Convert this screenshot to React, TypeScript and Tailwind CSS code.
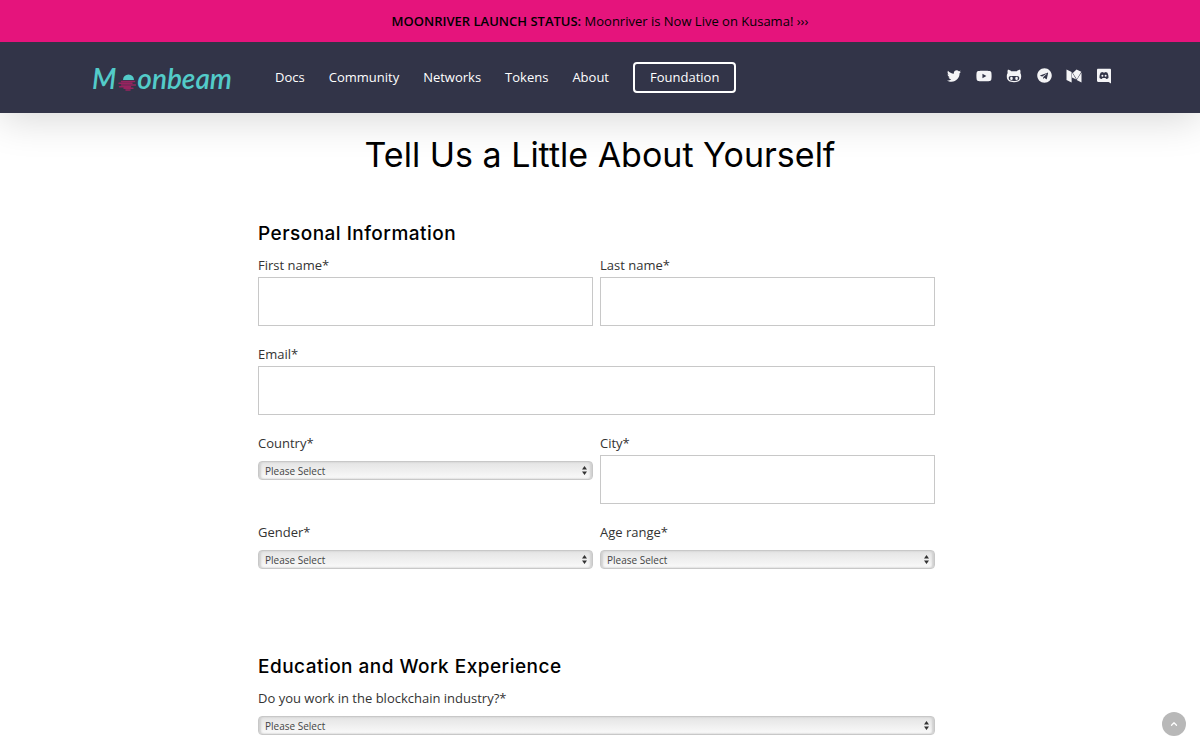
import type { ReactNode } from "react";
import { FaTelegram, FaTwitter, FaYoutube } from "react-icons/fa";
import { ChevronUp } from "lucide-react";

const navLinks = ["Docs", "Community", "Networks", "Tokens", "About"];

function MoonIcon() {
  return (
    <svg viewBox="0 0 18 17" className="mt-2.5 h-[17px] w-[18px] shrink-0" aria-hidden="true">
      <path d="M5 6a5.500 5.500 0 0 1 11 0z" fill="#53cbc9" />
      <path
        d="M3.500 7.500h13M1 9.300h13M3.500 11h14M1.500 12.700h11M6 14.300h9M8 16h4"
        stroke="#98235f"
        strokeWidth="1.500"
        strokeLinecap="round"
      />
    </svg>
  );
}

function Logo() {
  return (
    <a
      href="#"
      aria-label="Moonbeam"
      className="flex w-[140px] items-center justify-between font-['Lato',sans-serif] text-[28px] leading-8 font-semibold text-[#53cbc9] italic"
    >
      <span>M</span>
      <MoonIcon />
      <span>onbeam</span>
    </a>
  );
}

function GithubIcon() {
  return (
    <svg viewBox="0 0 16 16" className="size-4" fill="currentColor">
      <path
        fillRule="evenodd"
        d="M1.900 1.800c1.300 0 2.400.6 3.300 1.400h5.600c.9-.8 2-1.400 3.300-1.400.5 1.200.5 2.300.2 3.200.6.900.9 2 .9 3.600 0 4-2.600 5.600-7.200 5.600S.8 12.600.8 8.600C.8 7 1.100 5.900 1.700 5c-.3-.9-.3-2 .2-3.200zM5 7.900c-1.500 0-2.300.8-2.300 2.200 0 2.200 1.900 2.900 5.300 2.900s5.300-.7 5.300-2.900c0-1.400-.8-2.200-2.300-2.200z"
      />
      <rect x="4.200" y="8.800" width="2.500" height="3.200" rx="1.200" />
      <rect x="9.300" y="8.800" width="2.500" height="3.200" rx="1.200" />
    </svg>
  );
}

function MediumIcon() {
  return (
    <svg viewBox="0 0 16 16" className="size-4" fill="currentColor">
      <path d="M.5 1.500 5.600 4v10.500L.5 12z" />
      <path d="m6 4.400 4.300 7.200L6 9.600z" />
      <path d="m10.500 1.500 4.800 2.300-4.500 7.400L6.800 5z" />
      <path d="M15.500 4.500v10L10.700 12z" />
    </svg>
  );
}

function DiscordIcon() {
  return (
    <svg viewBox="0 0 16 16" className="size-4" fill="currentColor">
      <path
        fillRule="evenodd"
        d="M2.200.8h11.600c.8 0 1.200.5 1.200 1.200v13.500L12.600 14H2.200C1.400 14 1 13.500 1 12.800V2C1 1.300 1.400.8 2.200.8zM4.800 4.500C3.800 6.100 3.400 7.900 3.500 9.900c.7.700 1.500 1 2.400 1l.6-.8h3l.6.8c.9 0 1.700-.3 2.400-1 .1-2-.3-3.800-1.300-5.400-.7-.4-1.300-.6-1.900-.6l-.3.500H7l-.3-.5c-.6 0-1.200.2-1.900.6z"
      />
      <circle cx="6.400" cy="7.800" r="1" />
      <circle cx="9.600" cy="7.800" r="1" />
    </svg>
  );
}

const socials: { name: string; icon: ReactNode }[] = [
  { name: "Twitter", icon: <FaTwitter className="size-3.5" /> },
  { name: "YouTube", icon: <FaYoutube className="size-4" /> },
  { name: "GitHub", icon: <GithubIcon /> },
  { name: "Telegram", icon: <FaTelegram className="size-[15px]" /> },
  { name: "Medium", icon: <MediumIcon /> },
  { name: "Discord", icon: <DiscordIcon /> },
];

function SiteHeader() {
  return (
    <header className="bg-[#323448] shadow-[0_6px_40px_rgba(0,0,0,0.16)]">
      <div className="flex h-[71px] items-center pr-[88px] pl-[92px]">
        <Logo />
        <nav className="ml-[43px] flex items-center gap-6 text-[13px] text-white">
          {navLinks.map((link) => (
            <a key={link} href="#">
              {link}
            </a>
          ))}
          <a href="#" className="rounded border-2 border-white px-[15px] leading-[27px]">
            Foundation
          </a>
        </nav>
        <ul className="ml-auto flex items-center gap-3.5 pb-1 text-[#f4f4f6]">
          {socials.map(({ name, icon }) => (
            <li key={name}>
              <a href="#" aria-label={name} className="flex size-4 items-center justify-center">
                {icon}
              </a>
            </li>
          ))}
        </ul>
      </div>
    </header>
  );
}

interface FieldProps {
  id: string;
  label: string;
  type?: string;
}

function TextField({ id, label, type = "text" }: FieldProps) {
  return (
    <div>
      <label htmlFor={id} className="block leading-6">
        {label}
      </label>
      <input
        id={id}
        name={id}
        type={type}
        className="block h-[49px] w-full border border-[#c8c8c8] bg-white px-3 outline-none"
      />
    </div>
  );
}

function SelectField({ id, label }: FieldProps) {
  return (
    <div>
      <label htmlFor={id} className="block leading-6">
        {label}
      </label>
      <div className="relative mt-1.5">
        <select
          id={id}
          name={id}
          className="block h-[19px] w-full appearance-none rounded border border-[#c8c8c8] bg-linear-to-b from-[#e4e4e4] to-[#fafafa] px-1.5 text-[10px] leading-4 text-[#444] shadow-[inset_2px_0_2px_#d0d0d0,inset_-2px_0_2px_#d0d0d0]"
        >
          <option>Please Select</option>
        </select>
        <svg
          viewBox="0 0 5 9"
          className="pointer-events-none absolute top-[5px] right-1.5 h-[9px] w-[5px]"
          fill="#333"
        >
          <path d="M2.500 0 5 3.500H0zM2.500 9 5 5.500H0z" />
        </svg>
      </div>
    </div>
  );
}

function SectionTitle({ children }: { children: ReactNode }) {
  return (
    <h2 className="font-['Inter',sans-serif] text-[19px] leading-8 font-medium tracking-wide text-black">
      {children}
    </h2>
  );
}

export default function App() {
  return (
    <div className="h-screen overflow-hidden bg-white font-['Open_Sans',sans-serif] text-[13px] text-[#333]">
      <a href="#" className="relative z-10 block bg-[#e5147c] py-2 text-center leading-[26px] text-black">
        <strong className="font-semibold">MOONRIVER LAUNCH STATUS:</strong> Moonriver is Now Live on Kusama! ›››
      </a>
      <SiteHeader />

      <main className="pt-4">
        <h1 className="text-center font-['Inter',sans-serif] text-[34px] leading-[52px] text-black">
          Tell Us a Little About Yourself
        </h1>
        <div className="mt-[37px] pr-[7px]">
          <form className="mx-auto w-full max-w-[677px]">
            <section>
              <SectionTitle>Personal Information</SectionTitle>
              <div className="mt-[3px] grid grid-cols-2 gap-x-[7px] gap-y-4">
                <TextField id="firstname" label="First name*" />
                <TextField id="lastname" label="Last name*" />
                <div className="col-span-2">
                  <TextField id="email" label="Email*" type="email" />
                </div>
                <SelectField id="country" label="Country*" />
                <TextField id="city" label="City*" />
                <SelectField id="gender" label="Gender*" />
                <SelectField id="age" label="Age range*" />
              </div>
            </section>
            <section className="mt-[82px]">
              <SectionTitle>Education and Work Experience</SectionTitle>
              <div className="mt-[3px]">
                <SelectField id="industry" label="Do you work in the blockchain industry?*" />
              </div>
            </section>
          </form>
        </div>
      </main>

      <button
        type="button"
        aria-label="Back to top"
        className="fixed right-3.5 bottom-3.5 flex size-6 items-center justify-center rounded-full bg-[#b8b8b8] text-white"
      >
        <ChevronUp className="size-2.5" strokeWidth={3} />
      </button>
    </div>
  );
}
